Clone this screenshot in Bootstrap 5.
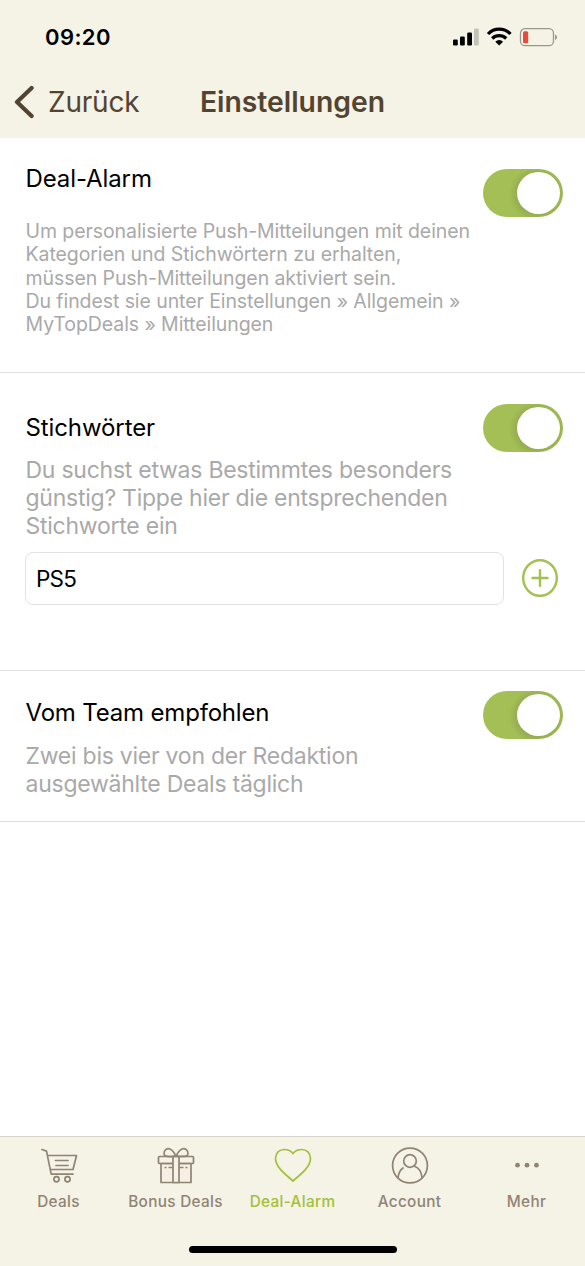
<!DOCTYPE html>
<html lang="de">
<head>
<meta charset="utf-8">
<meta name="viewport" content="width=device-width, initial-scale=1">
<title>Einstellungen</title>
<link href="https://cdn.jsdelivr.net/npm/bootstrap@5.3.0/dist/css/bootstrap.min.css" rel="stylesheet">
<style>
  body { font-family: Inter, "Liberation Sans", sans-serif; color: #000; height: 1266px; overflow: hidden; }
  svg { display: block; flex: none; }
  .app-head { background: #f5f2e6; height: 138px; color: #524430; }
  .status-row { height: 74px; padding: 0 28px 0 45px; color: #000; }
  .clock { font-size: 22px; font-weight: 600; line-height: 26px; letter-spacing: .4px; }
  .title-row { height: 64px; padding: 0 14px 8px; display: grid; grid-template-columns: 1fr auto 1fr; align-items: center; }
  .title-row .back { color: inherit; font-size: 28px; line-height: 34px; letter-spacing: -.2px; }
  .title-row .back svg { margin-right: 14px; }
  .title-row h1 { font-size: 28.3px; line-height: 34px; font-weight: 600; margin: 0; letter-spacing: 0; }
  .setting { border-bottom: 1px solid #dfdfdf; padding: 0 22px 0 25.5px; }
  .setting h2 { font-size: 24px; line-height: 30px; font-weight: 400; margin: 0; letter-spacing: -.1px; }
  .setting .copy { flex: 1 1 0; min-width: 0; }
  .hint { color: #a9a9a9; margin: 0; white-space: nowrap; }
  .hint-sm { font-size: 19.5px; line-height: 23.3px; letter-spacing: -.08px; margin-top: 26px; }
  .hint-md { font-size: 23px; line-height: 27.9px; letter-spacing: -.25px; margin-top: 14px; }
  .set-alarm { height: 235px; padding-top: 26px; }
  .set-words { height: 298px; padding-top: 31px; }
  .set-team { height: 151px; padding-top: 20px; }
  .set-alarm .toggle { padding-top: 5px !important; }
  .set-words h2 { padding-top: 9px; }
  .set-team h2 { padding-top: 7px; letter-spacing: -.18px; }
  .set-team .hint { margin-top: 15px; }
  .form-switch.toggle { padding: 0; margin: 0; min-height: 0; flex: none; }
  .form-switch.toggle .form-check-input {
    float: none; margin: 0; display: block; width: 80px; height: 48px; border: 0; border-radius: 24px;
    background: radial-gradient(circle at 54px 25px, #93ab50 19px, #a4bf55 28px); position: relative;
  }
  .toggle .form-check-input::after {
    content: ""; position: absolute; top: 3px; right: 3px; width: 43px; height: 42px; border-radius: 50%; background: #fff;
  }
  .add-word { gap: 17px; margin: 11px 0 0 -.5px; }
  .form-control.word { width: 479px; height: 53px; border: 1px solid #e2e2e2; border-radius: 8px; font-size: 22.5px; padding: 0 10px; color: #000; letter-spacing: -.8px; }
  .tabs { height: 130px; border-top: 1px solid #d6d4cc; background: #f5f2e6; color: #8f8474; }
  .tabs a { flex: 1 0 0; color: inherit; font-size: 15.3px; line-height: 20px; font-weight: 500; letter-spacing: .33px; white-space: nowrap; padding-top: 9px; }
  .tabs a.current { color: #a2c03a; }
  .tabs svg { margin-bottom: 8px; }
  .home-bar { width: 208px; height: 7px; border-radius: 4px; background: #000; margin: 0 auto 13px; }
</style>
</head>
<body class="d-flex flex-column bg-white">
<header class="app-head">
  <div class="status-row d-flex align-items-center justify-content-between">
    <span class="clock">09:20</span>
    <svg width="105" height="20" viewBox="0 0 105 20">
      <rect x="1" y="12.5" width="4.8" height="6" rx="1.2"/>
      <rect x="8" y="9.5" width="4.8" height="9" rx="1.2"/>
      <rect x="15.2" y="5.5" width="4.8" height="13" rx="1.2"/>
      <rect x="22" y="1.5" width="4.8" height="17" rx="1.2" fill="#c5c3b8"/>
      <g fill="none" stroke="#000" stroke-width="3.2"><path d="M36 7a15.5 15.5 0 0 1 22.5 0"/><path d="M40.2 11.5a10 10 0 0 1 14 0"/></g>
      <path d="M43.3 14.7a5.6 5.6 0 0 1 7.8 0L47.2 18.5z"/>
      <rect x="68.5" y="1.7" width="33" height="17" rx="4.5" fill="none" stroke="#9a978c" stroke-width="1.3"/>
      <rect x="71" y="4.2" width="5.2" height="12" rx="1.5" fill="#e8493f"/>
      <path d="M103 7.5q2 .6 2 2.700t-2 2.700z" fill="#9a978c"/>
    </svg>
  </div>
  <div class="title-row">
    <a href="#" class="back d-flex align-items-center text-decoration-none">
      <svg width="20" height="34" viewBox="0 0 20 34" fill="none" stroke="#524430" stroke-width="4.2" stroke-linecap="round" stroke-linejoin="round"><path d="M17.600 3 3 17l14.600 14"/></svg>Zurück
    </a>
    <h1>Einstellungen</h1>
    <span></span>
  </div>
</header>
<main class="flex-grow-1">
  <section class="setting set-alarm">
    <div class="d-flex justify-content-between">
      <div class="copy">
        <h2>Deal-Alarm</h2>
        <p class="hint hint-sm">Um personalisierte Push-Mitteilungen mit deinen<br>Kategorien und Stichwörtern zu erhalten,<br>müssen Push-Mitteilungen aktiviert sein.<br>Du findest sie unter Einstellungen » Allgemein »<br>MyTopDeals » Mitteilungen</p>
      </div>
      <div class="form-check form-switch toggle"><input class="form-check-input" type="checkbox" role="switch" checked aria-label="Deal-Alarm"></div>
    </div>
  </section>
  <section class="setting set-words">
    <div class="d-flex justify-content-between">
      <div class="copy">
        <h2>Stichwörter</h2>
        <p class="hint hint-md">Du suchst etwas Bestimmtes besonders<br>günstig? Tippe hier die entsprechenden<br>Stichworte ein</p>
      </div>
      <div class="form-check form-switch toggle"><input class="form-check-input" type="checkbox" role="switch" checked aria-label="Stichwörter"></div>
    </div>
    <div class="add-word d-flex align-items-center">
      <input class="form-control word" type="text" value="PS5" aria-label="Stichwort">
      <svg width="38" height="40" viewBox="0 0 38 40" fill="none" stroke="#a2c14e" stroke-width="2.4" stroke-linecap="round"><ellipse cx="19" cy="20" rx="16.800" ry="17.800"/><path d="M11.500 20h15M19 12.300v15.400"/></svg>
    </div>
  </section>
  <section class="setting set-team">
    <div class="d-flex justify-content-between">
      <div class="copy">
        <h2>Vom Team empfohlen</h2>
        <p class="hint hint-md">Zwei bis vier von der Redaktion<br>ausgewählte Deals täglich</p>
      </div>
      <div class="form-check form-switch toggle"><input class="form-check-input" type="checkbox" role="switch" checked aria-label="Vom Team empfohlen"></div>
    </div>
  </section>
</main>
<nav class="tabs d-flex flex-column justify-content-between">
  <div class="d-flex">
    <a href="#" class="d-flex flex-column align-items-center text-decoration-none">
      <svg width="38" height="38" viewBox="0 0 38 38" fill="none" stroke="currentColor" stroke-width="1.7" stroke-linecap="round" stroke-linejoin="round"><path d="M2 3.500l4.500 1.600 4.700 23H33M7.500 9.500h29l-3.500 14H10.200M15.500 14.500h12.500M16 19.500h12"/><circle cx="16.500" cy="33.300" r="2.600"/><circle cx="27.500" cy="33.300" r="2.600"/></svg>
      Deals</a>
    <a href="#" class="d-flex flex-column align-items-center text-decoration-none">
      <svg width="38" height="38" viewBox="0 0 38 38" fill="none" stroke="currentColor" stroke-width="1.7" stroke-linejoin="round"><path d="M4 17.500h30V36.500H4z" fill="#f8efe4"/><rect x="1.500" y="10.500" width="35" height="7" rx="1"/><path d="M16 10.500h6V36.500h-6z" fill="#f5f2e6"/><path d="M19 10.300C14 10.500 7.500 11.500 7 8S10 1.500 13 3s5 5 6 7.300c1-2.300 3-5.800 6-7.300s6.500 1.500 6 5-7 2.100-12 2.300z"/><path d="M7.500 21.500h2M11.500 21.500H16M22 21.500h4.500M28.500 21.500h2"/></svg>
      Bonus Deals</a>
    <a href="#" class="current d-flex flex-column align-items-center text-decoration-none">
      <svg width="38" height="38" viewBox="0 0 38 38" fill="none" stroke="currentColor" stroke-width="1.7" stroke-linejoin="round"><path d="M19 35C13 29.500 1.500 21.500 1.500 12.500 1.500 7 5.500 3.500 10 3.500c4 0 7.200 1.500 9 4 1.800-2.500 5-4 9-4 4.500 0 8.500 3.500 8.500 9C36.500 21.500 25 29.500 19 35z"/></svg>
      Deal-Alarm</a>
    <a href="#" class="d-flex flex-column align-items-center text-decoration-none">
      <svg width="38" height="38" viewBox="0 0 38 38" fill="none" stroke="currentColor" stroke-width="1.7" stroke-linecap="round"><circle cx="19" cy="19.500" r="17.400"/><circle cx="19" cy="15" r="6.300"/><path d="M7 31.800c.5-4.500 2-7.800 5-9.800M31 31.800c-.5-6-3-10-7.500-11.600"/></svg>
      Account</a>
    <a href="#" class="d-flex flex-column align-items-center text-decoration-none">
      <svg width="38" height="38" viewBox="0 0 38 38" fill="currentColor"><circle cx="9.500" cy="19.200" r="2.400"/><circle cx="19" cy="19.200" r="2.400"/><circle cx="28.500" cy="19.200" r="2.400"/></svg>
      Mehr</a>
  </div>
  <div class="home-bar"></div>
</nav>
<script src="https://cdn.jsdelivr.net/npm/bootstrap@5.3.0/dist/js/bootstrap.bundle.min.js"></script>
</body>
</html>
